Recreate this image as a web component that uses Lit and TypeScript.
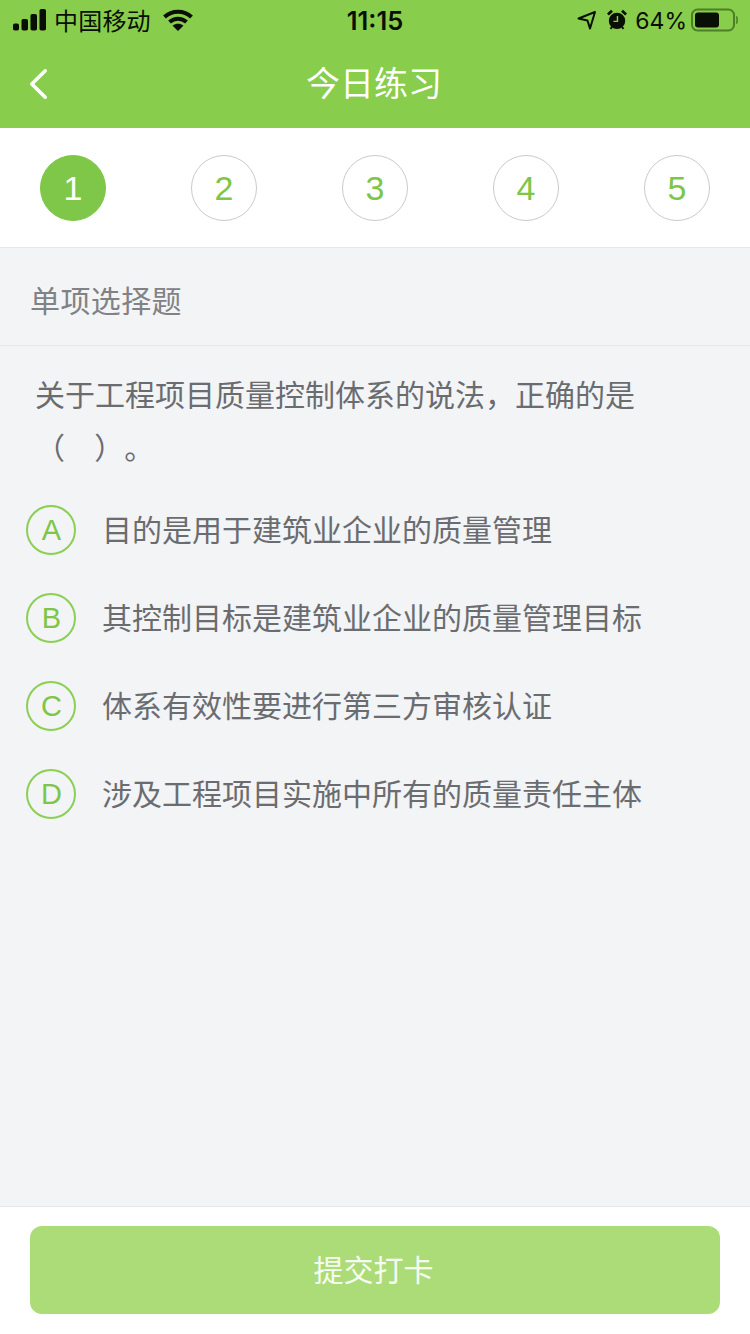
import { LitElement, html, css } from 'lit';
import { customElement } from 'lit/decorators.js';

const STEPS = [1, 2, 3, 4, 5];
const OPTIONS = [
  { key: 'A', text: '目的是用于建筑业企业的质量管理' },
  { key: 'B', text: '其控制目标是建筑业企业的质量管理目标' },
  { key: 'C', text: '体系有效性要进行第三方审核认证' },
  { key: 'D', text: '涉及工程项目实施中所有的质量责任主体' },
];

@customElement('app-root')
export class AppRoot extends LitElement {
  static styles = css`
    :host {
      display: flex;
      flex-direction: column;
      width: 750px;
      height: 1334px;
      overflow: hidden;
      background: #f3f4f6;
      font-family: 'Liberation Sans', 'Noto Sans CJK SC', sans-serif;
    }
    .header {
      height: 128px;
      background: #88cd4b;
      display: flex;
      flex-direction: column;
    }
    .status {
      height: 40px;
      display: grid;
      grid-template-columns: 1fr auto 1fr;
      align-items: center;
      color: #0a0f05;
      font-size: 26px;
    }
    .status-left {
      display: flex;
      align-items: center;
      padding-left: 13px;
      gap: 8px;
    }
    .carrier {
      font-size: 24px;
      letter-spacing: 0.2px;
      margin: 0 4px 2px 0;
    }
    .time {
      font-family: Inter, 'Liberation Sans', sans-serif;
      font-weight: 600;
      font-size: 25.5px;
      padding-top: 1px;
    }
    .status-right {
      display: flex;
      align-items: center;
      justify-content: flex-end;
      padding-right: 12px;
    }
    .clock {
      margin-left: 10px;
    }
    .pct {
      font-family: Inter, 'Liberation Sans', sans-serif;
      font-size: 23px;
      margin: 2px 4px 0 8px;
    }
    .nav {
      flex: 1;
      display: flex;
      align-items: center;
      justify-content: center;
      position: relative;
    }
    .back {
      position: absolute;
      left: 28px;
      top: 27px;
    }
    .title {
      color: #fff;
      font-size: 34px;
      padding: 0 2px 5px 0;
    }
    .steps {
      height: 120px;
      box-sizing: border-box;
      background: #fff;
      border-bottom: 1px solid #e6e7e9;
      display: flex;
      align-items: center;
      justify-content: space-between;
      padding: 1px 40px 0;
    }
    .step {
      width: 66px;
      height: 66px;
      box-sizing: border-box;
      border: 1px solid #c9cbc9;
      border-radius: 50%;
      display: flex;
      align-items: center;
      justify-content: center;
      color: #7ec648;
      font-size: 34px;
    }
    .step.active {
      background: #7fc748;
      border-color: #7fc748;
      color: #fff;
    }
    .section {
      height: 98px;
      box-sizing: border-box;
      border-bottom: 1px solid #e6e7e9;
      padding: 5px 0 0 30px;
      display: flex;
      align-items: center;
      color: #808285;
      font-size: 30px;
      letter-spacing: 0.4px;
    }
    .main {
      flex: 1;
      padding-top: 23px;
    }
    .question {
      margin: 0;
      padding: 0 100px 0 35px;
      font-size: 30px;
      line-height: 53px;
      font-weight: 400;
      color: #6a6c6f;
      text-spacing-trim: space-all;
      word-spacing: 21px;
    }
    .options {
      display: flex;
      flex-direction: column;
      gap: 38px;
      padding: 30px 0 0 26px;
    }
    .option {
      display: flex;
      align-items: center;
      gap: 26px;
      height: 50px;
      color: #6a6c6f;
      font-size: 30px;
    }
    .option-text {
      padding-bottom: 4px;
    }
    .badge {
      flex: none;
      width: 50px;
      height: 50px;
      box-sizing: border-box;
      border: 2px solid #8bcf55;
      border-radius: 50%;
      display: flex;
      align-items: center;
      justify-content: center;
      color: #7ec648;
      font-size: 29px;
      padding: 1px 0 0 1px;
    }
    .footer {
      height: 128px;
      box-sizing: border-box;
      background: #fff;
      border-top: 1px solid #e6e7e9;
      padding: 19px 30px 0;
    }
    .submit {
      width: 690px;
      height: 88px;
      border: 0;
      border-radius: 12px;
      background: #abdc78;
      color: #f7fcf2;
      font: inherit;
      font-size: 30px;
      padding: 0 3px 4px 0;
    }
  `;

  render() {
    return html`
      <div class="header">
        <div class="status">
          <div class="status-left">
            <svg width="33" height="22" viewBox="0 0 33 22" fill="#0a0f05">
              <rect x="0" y="14.5" width="6" height="7" rx="1.8" />
              <rect x="8.5" y="10" width="6.5" height="11.5" rx="1.8" />
              <rect x="17.5" y="5" width="6.5" height="16.5" rx="1.8" />
              <rect x="26.5" y="0" width="6.5" height="21.5" rx="1.8" />
            </svg>
            <span class="carrier">中国移动</span>
            <svg width="30" height="22" viewBox="0 0 30 22" fill="none" stroke="#0a0f05" stroke-width="4">
              <path d="M1.5 8 C9 1 21 1 28.5 8" />
              <path d="M6.5 13 C11.5 8.5 18.5 8.5 23.5 13" />
              <path d="M15 22 L9.6 16.8 C13 14.2 17 14.2 20.4 16.8 Z" fill="#0a0f05" stroke="none" />
            </svg>
          </div>
          <span class="time">11:15</span>
          <div class="status-right">
            <svg width="20" height="20" viewBox="0 0 20 20" fill="none" stroke="#0a0f05" stroke-width="2" stroke-linejoin="round">
              <path d="M1.5 8.5 L18 2 L13 18.5 L10.5 10.5 Z" />
            </svg>
            <svg class="clock" width="20" height="22" viewBox="0 0 22 24">
              <circle cx="11" cy="13" r="9" fill="#0a0f05" />
              <path d="M1 6 L5.5 1.8 M21 6 L16.5 1.8" stroke="#0a0f05" stroke-width="3" />
              <path d="M3.8 21.8 L5.6 19.6 M18.2 21.8 L16.4 19.6" stroke="#0a0f05" stroke-width="2" />
              <path d="M11.5 7.5 V13.5 H7" fill="none" stroke="#88cd4b" stroke-width="1.6" />
            </svg>
            <span class="pct">64%</span>
            <svg width="47" height="24" viewBox="0 0 47 24">
              <rect x="1" y="1.5" width="42" height="21" rx="5.5" fill="none" stroke="#4c7f27" stroke-width="2" />
              <rect x="4" y="4.5" width="24" height="15" rx="3" fill="#0a0f05" />
              <path d="M45.2 8.5 C46.5 9.5 46.5 14.5 45.2 15.5" fill="none" stroke="#4c7f27" stroke-width="1.6" />
            </svg>
          </div>
        </div>
        <div class="nav">
          <svg class="back" width="24" height="34" viewBox="0 0 24 34" fill="none" stroke="#fff" stroke-width="3.6" stroke-linecap="round" stroke-linejoin="round">
            <path d="M17.2 3.8 L3.8 17 L17.2 30.2" />
          </svg>
          <span class="title">今日练习</span>
        </div>
      </div>
      <div class="steps">
        ${STEPS.map(
          (n) => html`<div class="step ${n === 1 ? 'active' : ''}">${n}</div>`
        )}
      </div>
      <div class="section">单项选择题</div>
      <div class="main">
        <h2 class="question">关于工程项目质量控制体系的说法，正确的是（ ）。</h2>
        <div class="options">
          ${OPTIONS.map(
            (o) => html`
              <div class="option">
                <span class="badge">${o.key}</span>
                <span class="option-text">${o.text}</span>
              </div>
            `
          )}
        </div>
      </div>
      <div class="footer">
        <button class="submit">提交打卡</button>
      </div>
    `;
  }
}
